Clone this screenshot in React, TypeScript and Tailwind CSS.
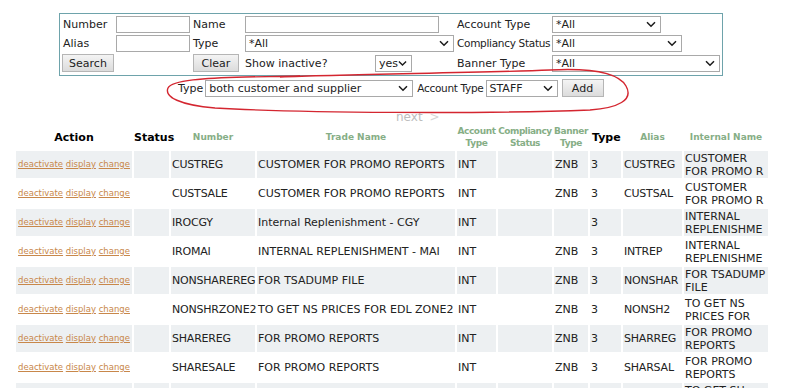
import React from 'react';

interface IRow {
  number: string;
  trade: string;
  acct: string;
  banner: string;
  type: string;
  alias: string;
  internal: [string, string];
}

const rows: IRow[] = [
  { number: 'CUSTREG', trade: 'CUSTOMER FOR PROMO REPORTS', acct: 'INT', banner: 'ZNB', type: '3', alias: 'CUSTREG', internal: ['CUSTOMER', 'FOR PROMO R'] },
  { number: 'CUSTSALE', trade: 'CUSTOMER FOR PROMO REPORTS', acct: 'INT', banner: 'ZNB', type: '3', alias: 'CUSTSAL', internal: ['CUSTOMER', 'FOR PROMO R'] },
  { number: 'IROCGY', trade: 'Internal Replenishment - CGY', acct: 'INT', banner: '', type: '3', alias: '', internal: ['INTERNAL', 'REPLENISHME'] },
  { number: 'IROMAI', trade: 'INTERNAL REPLENISHMENT - MAI', acct: 'INT', banner: 'ZNB', type: '3', alias: 'INTREP', internal: ['INTERNAL', 'REPLENISHME'] },
  { number: 'NONSHAREREG', trade: 'FOR TSADUMP FILE', acct: 'INT', banner: 'ZNB', type: '3', alias: 'NONSHAR', internal: ['FOR TSADUMP', 'FILE'] },
  { number: 'NONSHRZONE2', trade: 'TO GET NS PRICES FOR EDL ZONE2', acct: 'INT', banner: 'ZNB', type: '3', alias: 'NONSH2', internal: ['TO GET NS', 'PRICES FOR'] },
  { number: 'SHAREREG', trade: 'FOR PROMO REPORTS', acct: 'INT', banner: 'ZNB', type: '3', alias: 'SHARREG', internal: ['FOR PROMO', 'REPORTS'] },
  { number: 'SHARESALE', trade: 'FOR PROMO REPORTS', acct: 'INT', banner: 'ZNB', type: '3', alias: 'SHARSAL', internal: ['FOR PROMO', 'REPORTS'] },
  { number: 'SHARZONE2', trade: 'TO GET SH PRICES FOR ZONE2', acct: 'INT', banner: 'ZNB', type: '3', alias: 'SHARZ2', internal: ['TO GET SH', 'PRICES FOR'] }
];

const Chevron = () => (
  <svg width="10" height="7" viewBox="0 0 10 7">
    <path d="M1 1.2l4 4 4-4" fill="none" stroke="#1a1a1a" strokeWidth="1.5" />
  </svg>
);

const FakeSelect = ({ value, className }: { value: string; className: string }) => (
  <div
    className={`flex h-[17px] shrink-0 items-center justify-between border border-[#a9a9a9] bg-white pl-[3px] pr-[4px] text-[11px] leading-none text-[#222] ${className}`}
  >
    <span>{value}</span>
    <Chevron />
  </div>
);

const FakeButton = ({ label, className }: { label: string; className: string }) => (
  <div
    className={`flex h-[18px] shrink-0 items-center justify-center border border-[#b5b5b5] bg-gradient-to-b from-[#f4f4f4] to-[#dcdcdc] text-[11px] leading-none text-[#222] ${className}`}
  >
    {label}
  </div>
);

const Input = ({ className }: { className: string }) => (
  <div className={`h-[17px] border border-[#a9a9a9] bg-white ${className}`} />
);

export default function App() {
  return (
    <div className="relative h-[388px] w-[800px] overflow-hidden bg-white font-['DejaVu_Sans',sans-serif] text-[#222]">
      {/* filter box */}
      <div className="ml-[59px] mt-[13px] flex h-[63px] w-[664px] flex-col gap-[2px] border border-[#6ea3ab] pt-[2px] text-[11px] leading-none">
        <div className="flex h-[17px] items-center whitespace-nowrap">
          <div className="w-[56px] shrink-0 pl-[3px]">Number</div>
          <div className="w-[77px] shrink-0">
            <Input className="w-[74px]" />
          </div>
          <div className="w-[52px] shrink-0">Name</div>
          <div className="w-[212px] shrink-0">
            <Input className="w-[194px]" />
          </div>
          <div className="w-[95px] shrink-0">Account Type</div>
          <FakeSelect value="*All" className="w-[109px]" />
        </div>
        <div className="flex h-[17px] items-center whitespace-nowrap">
          <div className="w-[56px] shrink-0 pl-[3px]">Alias</div>
          <div className="w-[77px] shrink-0">
            <Input className="w-[74px]" />
          </div>
          <div className="w-[52px] shrink-0">Type</div>
          <div className="w-[212px] shrink-0">
            <FakeSelect value="*All" className="w-[209px]" />
          </div>
          <div className="w-[95px] shrink-0 text-[10.5px] tracking-[-0.3px]">Compliancy Status</div>
          <FakeSelect value="*All" className="w-[130px]" />
        </div>
        <div className="flex h-[18px] items-center whitespace-nowrap">
          <div className="w-[56px] shrink-0 pl-[2px]">
            <FakeButton label="Search" className="w-[52px]" />
          </div>
          <div className="w-[77px] shrink-0" />
          <div className="w-[52px] shrink-0">
            <FakeButton label="Clear" className="w-[46px]" />
          </div>
          <div className="flex w-[212px] shrink-0 items-center">
            <span className="w-[130px]">Show inactive?</span>
            <FakeSelect value="yes" className="w-[37px]" />
          </div>
          <div className="w-[95px] shrink-0">Banner Type</div>
          <FakeSelect value="*All" className="w-[168px]" />
        </div>
      </div>

      {/* add row */}
      <div className="mt-[3px] flex items-center whitespace-nowrap pl-[178px] text-[11px] leading-none">
        <span className="mr-[2px]">Type</span>
        <FakeSelect value="both customer and supplier" className="w-[208px]" />
        <span className="ml-[4px] mr-[2px] text-[10.5px] tracking-[-0.3px]">Account Type</span>
        <FakeSelect value="STAFF" className="w-[72px]" />
        <FakeButton label="Add" className="ml-[4px] w-[42px]" />
      </div>

      {/* red hand drawn ring */}
      <svg className="pointer-events-none absolute left-0 top-0" width="800" height="130">
        <path
          d="M280 77 C350 74 480 73 550 70 C590 68 618 72 626 86 C634 100 618 108 590 110 C480 114 300 113 215 108 C180 105 164 97 168 88 C172 80 205 78 245 77 L300 76"
          fill="none"
          stroke="#d42630"
          strokeWidth="1.4"
        />
      </svg>

      <div className="mt-[14px] pl-[396px] text-[12px] leading-none text-[#bdbdbd]">
        next <span className="ml-[3px] text-[#d6d6d6]">&gt;</span>
      </div>

      {/* results */}
      <table className="-mt-[1px] ml-[14px] w-[756px] table-fixed border-separate border-spacing-[2px] text-[11px]">
        <colgroup>
          <col className="w-[116px]" />
          <col className="w-[35px]" />
          <col className="w-[84px]" />
          <col className="w-[198px]" />
          <col className="w-[39px]" />
          <col className="w-[54px]" />
          <col className="w-[34px]" />
          <col className="w-[31px]" />
          <col className="w-[59px]" />
          <col className="w-[84px]" />
        </colgroup>
        <thead>
          <tr className="h-[24px] text-center align-middle font-bold leading-[12px]">
            <th className="pt-[3px] text-[11px] text-black">Action</th>
            <th className="pt-[3px] text-[11px] text-black">Status</th>
            <th className="pt-[1px] text-[9px] text-[#86ae86]">Number</th>
            <th className="pt-[1px] text-[9px] text-[#86ae86]">Trade Name</th>
            <th className="whitespace-nowrap pt-[1px] text-[9px] tracking-[-0.4px] text-[#86ae86]">
              Account
              <br />
              Type
            </th>
            <th className="whitespace-nowrap pt-[1px] text-[9px] tracking-[-0.5px] text-[#86ae86]">
              Compliancy
              <br />
              Status
            </th>
            <th className="whitespace-nowrap pt-[1px] text-[9px] tracking-[-0.4px] text-[#86ae86]">
              Banner
              <br />
              Type
            </th>
            <th className="pl-[2px] pt-[3px] text-left text-[11px] text-black">Type</th>
            <th className="pt-[1px] text-[9px] text-[#86ae86]">Alias</th>
            <th className="whitespace-nowrap pt-[1px] text-[9px] text-[#86ae86]">Internal Name</th>
          </tr>
        </thead>
        <tbody>
          {rows.map((r, i) => {
            const bg = i % 2 === 0 ? 'bg-[#edf0f2]' : 'bg-white';
            return (
              <tr key={r.number} className="h-[27px] align-middle leading-[13px]">
                <td className={`${bg} whitespace-nowrap text-center text-[8.5px]`}>
                  <span className="text-[#c8874a] underline">deactivate</span>{' '}
                  <span className="text-[#c8874a] underline">display</span>{' '}
                  <span className="text-[#c8874a] underline">change</span>
                </td>
                <td className={bg} />
                <td className={`${bg} whitespace-nowrap pl-[1px] tracking-[-0.2px]`}>{r.number}</td>
                <td className={`${bg} whitespace-nowrap pl-[1px]`}>{r.trade}</td>
                <td className={`${bg} pl-[1px]`}>{r.acct}</td>
                <td className={bg} />
                <td className={`${bg} pl-[1px]`}>{r.banner}</td>
                <td className={`${bg} pl-[1px]`}>{r.type}</td>
                <td className={`${bg} whitespace-nowrap pl-[1px] tracking-[-0.2px]`}>{r.alias}</td>
                <td className={`${bg} whitespace-nowrap pl-[1px]`}>
                  {r.internal[0]}
                  <br />
                  {r.internal[1]}
                </td>
              </tr>
            );
          })}
        </tbody>
      </table>
    </div>
  );
}
